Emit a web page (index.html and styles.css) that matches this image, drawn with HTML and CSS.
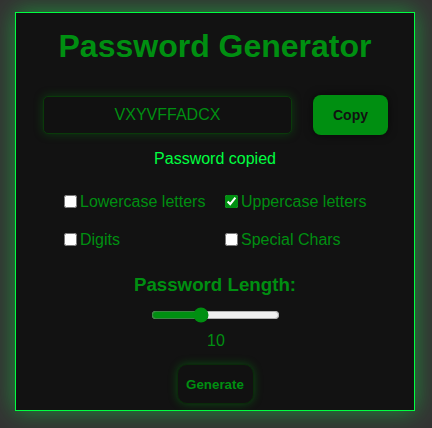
FILE: index.html
```html
<!DOCTYPE html>
<html lang="en">
<head>
<meta charset="utf-8">
<title>Password Generator</title>
<link rel="stylesheet" href="styles.css">
</head>
<body>
<div class="card">
  <h1 class="title">Password Generator</h1>
  <div class="output-row">
    <input class="password" type="text" value="VXYVFFADCX" readonly>
    <button class="copy-btn">Copy</button>
  </div>
  <p class="status">Password copied</p>
  <div class="options">
    <label class="option"><input type="checkbox">Lowercase letters</label>
    <label class="option"><input type="checkbox" checked>Uppercase letters</label>
    <label class="option"><input type="checkbox">Digits</label>
    <label class="option"><input type="checkbox">Special Chars</label>
  </div>
  <h3 class="length-title">Password Length:</h3>
  <input class="length" type="range" min="4" max="20" value="10">
  <div class="length-value">10</div>
  <button class="generate-btn">Generate</button>
</div>
</body>
</html>
```
FILE: styles.css
```css
html, body {
  margin: 0;
  padding: 0;
}
body {
  background: #333333;
  font-family: "Liberation Sans", Arial, sans-serif;
  padding-top: 12px;
  height: 428px;
  box-sizing: border-box;
  overflow: hidden;
}
.card {
  width: 400px;
  height: 399px;
  box-sizing: border-box;
  margin-left: 15px;
  background: #121212;
  border: 1px solid #00ff41;
  box-shadow: 0 0 22px rgba(0, 255, 65, 0.45);
  display: flex;
  flex-direction: column;
  align-items: center;
  padding: 15px 0 6px;
}
.title {
  margin: 0;
  font-size: 32px;
  font-weight: bold;
  color: #008f11;
}
.output-row {
  display: flex;
  align-items: center;
  gap: 21px;
  margin-top: 30px;
  margin-left: 1px;
}
.password {
  width: 249px;
  height: 38px;
  box-sizing: border-box;
  background: #111111;
  border: 1px solid #0a3a0a;
  border-radius: 5px;
  box-shadow: 0 0 10px rgba(0, 143, 17, 0.35);
  color: #008f11;
  font-family: "Liberation Sans", Arial, sans-serif;
  font-size: 16px;
  text-align: center;
  outline: none;
  padding: 0;
}
.copy-btn {
  width: 75px;
  height: 40px;
  box-sizing: border-box;
  background: #008f11;
  color: #111111;
  border: none;
  border-radius: 8px;
  box-shadow: 0 0 8px rgba(0, 0, 0, 0.6);
  font-family: "Liberation Sans", Arial, sans-serif;
  font-size: 14px;
  font-weight: bold;
  padding: 0;
}
.status {
  margin: 15px 0 0;
  font-size: 16px;
  color: #00ff41;
}
.options {
  display: grid;
  grid-template-columns: 145px 145px;
  column-gap: 16px;
  row-gap: 19px;
  margin-top: 24px;
  margin-right: 4px;
}
.option {
  display: flex;
  align-items: center;
  height: 19px;
  font-size: 16px;
  color: #008f11;
  white-space: nowrap;
}
.option input {
  margin: 3px 3px 3px 4px;
  width: 13px;
  height: 13px;
  flex: none;
  accent-color: #008f11;
}
.length-title {
  margin: 25px 0 0;
  font-size: 18.72px;
  font-weight: bold;
  color: #008f11;
}
.length {
  width: 129px;
  height: 16px;
  margin: 11px 2px 2px;
  accent-color: #008f11;
}
.length-value {
  margin-top: 7px;
  font-size: 16px;
  color: #008f11;
  margin-left: 2px;
}
.generate-btn {
  margin-top: 14px;
  width: 77px;
  height: 40px;
  box-sizing: border-box;
  background: #111111;
  color: #008f11;
  border: 1px solid #0a2a0a;
  border-radius: 10px;
  box-shadow: 0 0 8px rgba(0, 143, 17, 0.45);
  font-family: "Liberation Sans", Arial, sans-serif;
  font-size: 13.33px;
  font-weight: bold;
  padding: 0;
}
```
